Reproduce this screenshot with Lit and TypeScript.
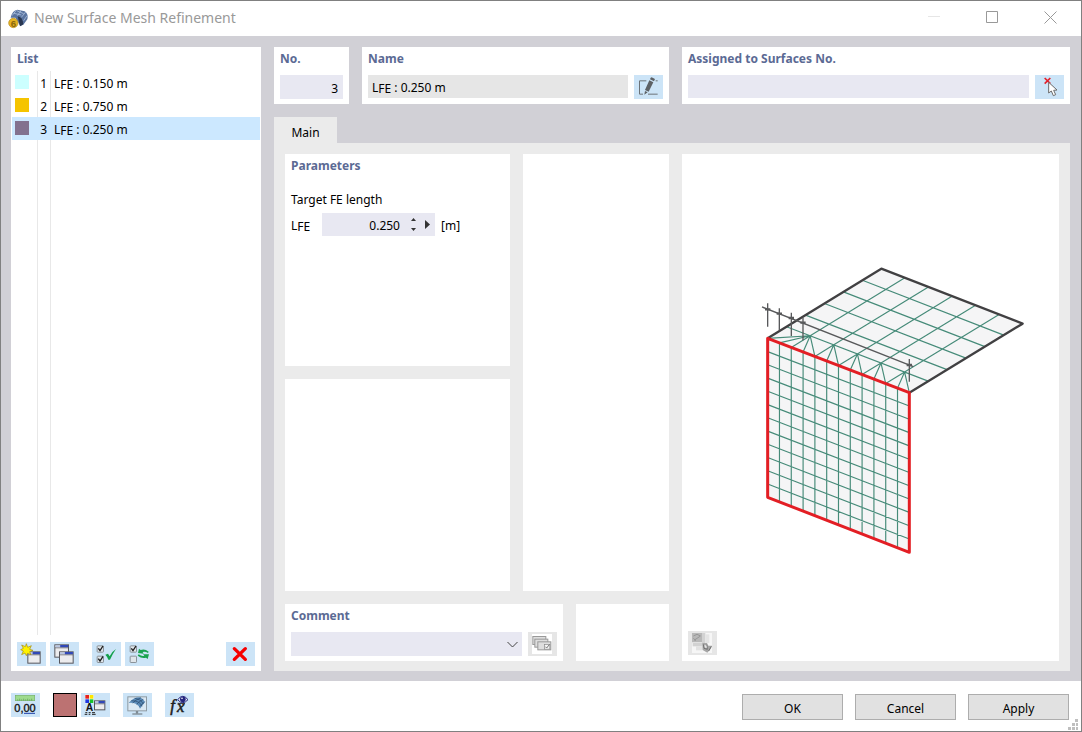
import { LitElement, html, svg, css } from "lit";
import { customElement, state } from "lit/decorators.js";

interface Refinement {
  no: number;
  color: string;
  length: string;
}

const ITEMS: Refinement[] = [
  { no: 1, color: "#ccffff", length: "0.150" },
  { no: 2, color: "#f5c400", length: "0.750" },
  { no: 3, color: "#83718f", length: "0.250" },
];

/* Icons share an 87 x 72 grid, three units to each screen pixel. */
const icon = (body: unknown) => html`
  <svg class="icon" viewBox="0 0 87 72" aria-hidden="true">${body}</svg>
`;

const miniWindow = (x: number, y: number, w = 40, h = 37) => svg`
  <rect x=${x + 1.5} y=${y + 1.5} width=${w - 3} height=${h - 3} fill="#ececee" stroke="#56565c" stroke-width="3"/>
  <rect x=${x + 3} y=${y + 3} width=${w - 6} height="6" fill="#b9c6e2"/>
  <rect x=${x + w * 0.4} y=${y + 2} width=${w * 0.55} height="7" fill="#3148b8"/>
  <path d="M${x + 2} ${y + 10.5}h${w - 4}" stroke="#56565c" stroke-width="2"/>
`;

const tickBox = (x: number, y: number, ticked: boolean) => svg`
  <rect x=${x + 1.5} y=${y + 1.5} width="19" height="19" rx="2" fill="#dfe5ea" stroke="#8a9299" stroke-width="3"/>
  ${ticked ? svg`<path d="M${x + 5} ${y + 9}l5 7 9-14" fill="none" stroke="#1c1c1c" stroke-width="4"/>` : null}
`;

const icons = {
  create: icon(svg`
    ${miniWindow(31, 28)}
    <path d="M28 5l4 11 11-5-5 11 10 3-10 4 4 9-10-4-4 7-4-8-10 5 5-11-8-4 8-4-5-10 11 5z" fill="#fff200" stroke="#a58b10" stroke-width="2"/>`),
  copy: icon(svg`${miniWindow(13, 7, 44, 40)}${miniWindow(27, 28, 44, 37)}`),
  checkAll: icon(svg`
    ${tickBox(14, 10, true)}${tickBox(14, 41, true)}
    <path d="M40 38l8-3 5 8q6-14 19-22-11 16-18 32h-5q-3-9-9-15z" fill="#14a14c"/>`),
  invert: icon(svg`
    ${tickBox(14, 10, true)}${tickBox(14, 41, false)}
    <path d="M39 33l3-13 5 4q12-5 24 5l-2 4q-9-6-16-3l3 5z" fill="#1aa34f"/>
    <path d="M72 37l-4 14-5-4q-12 4-25-6l3-4q10 7 17 4l-4-4z" fill="#1aa34f"/>`),
  remove: icon(svg`
    <path d="M25 20l33 32M58 20L25 52" fill="none" stroke="#f60000" stroke-width="10" stroke-linecap="round"/>`),
  units: icon(svg`
    <rect x="13" y="7" width="58" height="16" fill="#9edb8e" stroke="#74b266" stroke-width="2"/>
    <path d="M20 23v-4M26 23v-6M32 23v-4M38 23v-6M44 23v-4M50 23v-6M56 23v-4M62 23v-6" stroke="#5a9a4e" stroke-width="2"/>
    <text x="10" y="56" font-family="Liberation Sans" font-size="33" fill="#111" stroke="#111">0,00</text>
    <path d="M39 61h33" stroke="#1f3fa8" stroke-width="3"/>`),
  display: icon(svg`
    <path d="M12 5h26v26H12z" fill="#fff" opacity=".7"/>
    <rect x="13" y="6" width="11" height="11" fill="#e8221c"/><rect x="26" y="6" width="11" height="11" fill="#ffe600"/>
    <rect x="13" y="19" width="11" height="11" fill="#1f36e0"/><rect x="26" y="19" width="11" height="11" fill="#17c22b"/>
    <text x="14" y="55" font-family="Liberation Sans" font-weight="bold" font-size="31" fill="#111">A</text>
    <path d="M13 59h6m4 0h6m4 0h9M11 64h8m4 0h5m5 0h11" stroke="#222" stroke-width="3"/>
    ${miniWindow(39, 22, 34, 30)}`),
  view: icon(svg`
    <rect x="14.500" y="11.500" width="56" height="42" fill="#dbe9f4" stroke="#8d9aa3" stroke-width="3"/>
    <path d="M42 54v8" stroke="#7f8b94" stroke-width="7"/><path d="M28 63h30" stroke="#7f8b94" stroke-width="4"/>
    <path d="M17 30Q32 12 50 13q11 3 16 14L51 47q-3-10-13-15-11-4-21-2z" fill="#5d8dba"/>
    <path d="M25 23q26 0 32 17M35 16q18 2 26 17M29 30q8-9 25-16M41 34q7-9 20-15M50 41l15-15" fill="none" stroke="#284a6d" stroke-width="2"/>`),
  formula: icon(svg`
    <g font-family="Liberation Serif" font-style="italic" fill="#1c1c1c" stroke="#1c1c1c" stroke-width="1.500">
      <text x="16" y="55" font-size="50">f</text><text x="36" y="57" font-size="50">x</text>
    </g>
    <path d="M38 31h22" stroke="#222" stroke-width="3"/>
    <path d="M38 20q15-20 31 0-16 18-31 0z" fill="#e7e9f7" stroke="#25257d" stroke-width="3"/>
    <circle cx="53.500" cy="19" r="8.500" fill="#25257d"/><circle cx="51" cy="16" r="2.500" fill="#fff"/>`),
  edit: icon(svg`
    <path d="M37 17.500H16.500v40H27M42 57.500h29M65 17.500h6" fill="none" stroke="#6c7378" stroke-width="3"/>
    <path d="M46 16l12 6-14 28-11-5zM50 8l3-1 10 5-3 7-12-6zM33 48l8 4-10 7z" fill="#5d6165"/>`),
  pick: icon(svg`
    <path d="M29 9l17 17M46 9L29 26" stroke="#e3202b" stroke-width="5"/>
    <path d="M41 22v32l8-6 6 14 7-3-6-13 10-1z" fill="#fff" stroke="#6a6a6a" stroke-width="3"/>`),
  library: icon(svg`
    <rect x="12" y="6" width="60" height="60" fill="#fff"/>
    <g fill="#dedede" stroke="#999" stroke-width="3">
      <rect x="14.500" y="13.500" width="39" height="24"/><rect x="20.500" y="21.500" width="39" height="24"/><rect x="29.500" y="29.500" width="39" height="24"/>
    </g>
    <rect x="49.500" y="37.500" width="16" height="14" fill="#f6f6f6" stroke="#888" stroke-width="2"/>
    <path d="M52 44l4 4 8-10" fill="none" stroke="#777" stroke-width="3"/>`),
  picture: icon(svg`
    <rect x="12" y="6" width="60" height="60" fill="#f6f6f6"/>
    <rect x="42" y="6" width="10" height="30" fill="#d2d2d2"/><rect x="52" y="10" width="12" height="26" fill="#e4e4e4"/>
    <rect x="14" y="36" width="30" height="10" fill="#d2d2d2"/><rect x="24" y="46" width="20" height="12" fill="#e2e2e2"/>
    <rect x="12" y="6" width="30" height="28" fill="#b8b8b8"/>
    <path d="M16 15l11-5 11 5M18 28l18-12M16 22l8 7" fill="none" stroke="#979797" stroke-width="3"/>
    <path d="M43 36h14l4 8h11l-4 10-10 11-14-8z" fill="#a6a6a6"/>
    <path d="M46 40l2 12 10 3-2-14M70 46l-8 14" fill="none" stroke="#737373" stroke-width="3"/>
    <path d="M49 43h6l2 7h-6z" fill="#e6e6e6"/>`),
};

/* Mesh sketch: a fine wall mesh joined to a coarse slab mesh by a fan of triangles. */
type Point = [number, number];
const line = (a: Point, b: Point) => `M${a[0].toFixed(1)} ${a[1].toFixed(1)}L${b[0].toFixed(1)} ${b[1].toFixed(1)}`;
const mix = (a: Point, b: Point, t: number): Point => [a[0] + (b[0] - a[0]) * t, a[1] + (b[1] - a[1]) * t];

const A: Point = [83, 265];
const B: Point = [424, 56];
const C: Point = [848, 221];
const D: Point = [508, 428];
const E: Point = [508, 907];
const F: Point = [83, 742];

function meshPath(): string {
  const parts: string[] = [];
  for (let i = 1; i < 12; i++) {
    parts.push(line(mix(A, D, i / 12), mix(F, E, i / 12)));
    parts.push(line(mix(A, F, i / 12), mix(D, E, i / 12)));
  }
  for (let i = 1; i < 6; i++) {
    parts.push(line(mix(A, B, i / 6), mix(D, C, i / 6)));
    const node = mix(mix(A, B, 1 / 6), mix(D, C, 1 / 6), i / 6);
    parts.push(line(mix(B, C, i / 6), node));
    for (let k = i === 1 ? 0 : i * 2; k <= i * 2 + 2; k++) {
      parts.push(line(node, mix(A, D, k / 12)));
    }
  }
  return parts.join("");
}

const sketch = html`
  <svg class="sketch" viewBox="0 0 377 477" role="img" aria-label="Surface mesh refinement">
    <g transform="translate(58 96) scale(0.3333)" fill="none" stroke-linejoin="round">
      <path d="M${A}L${B}L${C}L${D}L${E}L${F}z" fill="#f5f5f6"/>
      <path d=${meshPath()} stroke="#468b79" stroke-width="3.500"/>
      <path d="M${A}L${B}L${C}L${D}" stroke="#414042" stroke-width="7"/>
      <path d="M66 171L520 350M83 160v70M118 175v66M154 188v70M189 203v68M508 327v68" stroke="#58595b" stroke-width="4"/>
      <path d="M75 178h16M110 191h16M146 204h16M181 218h16M500 345h16" stroke="#58595b" stroke-width="7"/>
      <path d="M${A}L${D}L${E}L${F}z" stroke="#e31e24" stroke-width="9"/>
    </g>
  </svg>
`;

@customElement("app-root")
export class AppRoot extends LitElement {
  @state() private selected = 3;

  static styles = css`
    :host {
      display: block;
      font-family: "Noto Sans", "Open Sans", sans-serif;
      font-size: 12px;
      line-height: 18px;
      color: #000;
    }
    * { box-sizing: border-box; }
    button, input, select { font: inherit; color: inherit; margin: 0; padding: 0; border: 0; border-radius: 0; }
    input, select { min-width: 0; height: 24px; background: #e8e8f2; appearance: none; }
    .window { display: flex; flex-direction: column; min-height: 100vh; border: 1px solid #808080; background: #fff; }

    .titlebar { display: flex; align-items: center; height: 35px; padding-left: 7px; }
    .title { flex: 1; margin: 0 0 2px 6px; font-size: 14px; font-weight: 400; color: #999; }
    .logo { width: 20px; height: 20px; }
    .control { width: 58px; height: 34px; background: none; }
    .control svg { display: block; width: 13px; height: 13px; margin: auto; fill: none; stroke: #999; }
    .control .faint { stroke: #e6e6e6; }
    .controls { display: flex; padding-right: 2px; margin-bottom: 2px; }

    .body { flex: 1; display: grid; grid-template-columns: 250px minmax(0, 1fr); gap: 13px; padding: 11px 11px 10px 10px; background: #d1d0d6; }
    .card { background: #fff; padding: 2px 6px 5px; min-width: 0; }
    h2, .heading { display: block; margin: 0; font-size: 12px; line-height: 20px; font-weight: 700; color: #5b6a94; }
    .field-row { display: flex; gap: 6px; margin-top: 6px; }
    .field-row > :first-child { flex: 1; }
    sub { font-size: 12px; line-height: 1; vertical-align: -1px; }

    .tool { flex: none; width: 29px; height: 24px; background: #cce4f7; }
    .tool:disabled { background: #e6e6e6; }
    .icon { display: block; width: 29px; height: 24px; }
    .gap { margin-left: 9px; }
    .push { margin-left: auto; }

    .list { display: flex; flex-direction: column; }
    .items {
      flex: 1; margin: 2px -5px 7px; padding: 0; list-style: none;
      background:
        linear-gradient(#e8e8e8, #e8e8e8) 25px 0 / 1px 100% no-repeat,
        linear-gradient(#e8e8e8, #e8e8e8) 38px 0 / 1px 100% no-repeat;
    }
    .item { display: grid; grid-template-columns: 14px 18px 1fr; align-items: center; height: 23px; padding-left: 3px; cursor: default; }
    .item[aria-selected="true"] { background: #cce8ff; }
    .swatch { height: 14px; margin-bottom: 1px; }
    .number { padding-top: 2px; text-align: right; }
    .label { padding: 2px 0 0 7px; }
    .tools { display: flex; gap: 4px; }

    .main { display: flex; flex-direction: column; min-width: 0; }
    .top { display: grid; grid-template-columns: 75px minmax(0, 307px) minmax(0, 1fr); gap: 13px; margin-bottom: 13px; }
    .no { width: 100%; padding: 2px 5px 0 0; text-align: right; }
    .name { height: 23px; padding: 4px 4px 0; background: #e6e6e6; }
    .assigned { height: 23px; }
    .tab { width: 63px; height: 26px; padding-top: 5px; background: #ebebeb; }
    .page {
      flex: 1; display: grid; gap: 13px; padding: 11px 11px 10px; background: #ebebeb;
      grid-template-columns: 225px 40px 93px minmax(0, 1fr);
      grid-template-rows: 1fr 1fr auto;
    }
    .middle { grid-column: 2 / 4; grid-row: 1 / 3; }
    .preview { grid-column: 4; grid-row: 1 / 4; display: flex; flex-direction: column; padding: 0 6px 6px; }
    .sketch { flex: 1; min-height: 0; margin: 0 -6px; }
    .comment { grid-column: 1 / 3; }
    .parameter { display: block; margin-top: 15px; }
    .length-row { display: flex; align-items: center; margin-top: 4px; }
    .symbol { width: 31px; padding-top: 2px; }
    .spin { display: flex; align-items: center; width: 113px; height: 23px; margin-right: 6px; background: #e8e8f2; }
    .spin input { flex: 1; height: 23px; padding-top: 2px; text-align: right; background: none; }
    .steps { display: grid; width: 8px; margin-left: 9px; gap: 7px; }
    .step, .more { background: none; }
    .step svg, .more svg { display: block; fill: #333; }
    .more { width: 18px; padding: 0 4px 0 7px; }
    .unit { padding-top: 2px; }
    .select { display: grid; align-items: center; }
    .select > * { grid-area: 1 / 1; }
    .select select { width: 100%; }
    .select svg { justify-self: end; margin-right: 4px; width: 11px; height: 7px; fill: none; stroke: #444; pointer-events: none; }

    .footer { display: flex; align-items: flex-start; gap: 12px; height: 50px; padding: 12px 0 0 10px; }
    .left { display: flex; flex: 1; gap: 4px; }
    .wide { margin-left: 9px; }
    .color { width: 24px; height: 24px; margin-left: 9px; border: 1px solid #000; background: #bc7272; }
    .action { width: 101px; height: 26px; padding-top: 3px; margin-top: 1px; border: 1px solid #adadad; background: #e1e1e1; }
    .grip { align-self: flex-end; width: 10px; height: 11px; margin: 0 3px 1px -13px; fill: #bfbfbf; }
  `;

  private itemLabel(length: string) {
    return html`L<sub>FE</sub> : ${length} m`;
  }

  render() {
    const current = ITEMS.find((item) => item.no === this.selected) ?? ITEMS[0];
    return html`
      <div class="window">
        <header class="titlebar">
          <svg class="logo" viewBox="0 0 60 60" aria-hidden="true">
            <path d="M8 26Q13 4 28 2l22 5q12 8 8 24L46 47l-9 4-15-25z" fill="#5a74a0"/>
            <path d="M18 13l22 5M26 5l21 9M28 20L40 4M40 25L53 9M47 35l10-15M12 20l12-15" fill="none" stroke="#a9bedd" stroke-width="2.500"/>
            <path d="M29 22q15 2 17 24l-10 6z" fill="#2a3852"/>
            <circle cx="16" cy="42" r="14" fill="#e6b422" stroke="#b58a1c" stroke-width="2"/>
            <text x="8" y="53" font-family="Liberation Sans" font-weight="bold" font-size="29" fill="#8a660f">6</text>
          </svg>
          <h1 class="title">New Surface Mesh Refinement</h1>
          <div class="controls">
            <button class="control" aria-label="Minimize"><svg viewBox="0 0 13 13"><path class="faint" d="M0 5.500h12"/></svg></button>
            <button class="control" aria-label="Maximize"><svg viewBox="0 0 13 13"><path d="M.5.5h11v11H.5z"/></svg></button>
            <button class="control" aria-label="Close"><svg viewBox="0 0 13 13"><path d="M.5.5l12 12M12.500.5l-12 12"/></svg></button>
          </div>
        </header>

        <div class="body">
          <section class="card list">
            <h2>List</h2>
            <ul class="items" role="listbox" aria-label="List">
              ${ITEMS.map((item) => html`
                <li class="item" role="option" aria-selected=${item.no === this.selected} @click=${() => (this.selected = item.no)}>
                  <span class="swatch" style="background:${item.color}"></span>
                  <span class="number">${item.no}</span>
                  <span class="label">${this.itemLabel(item.length)}</span>
                </li>`)}
            </ul>
            <div class="tools">
              <button class="tool" aria-label="New">${icons.create}</button>
              <button class="tool" aria-label="Copy">${icons.copy}</button>
              <button class="tool gap" aria-label="Select all">${icons.checkAll}</button>
              <button class="tool" aria-label="Invert selection">${icons.invert}</button>
              <button class="tool push" aria-label="Delete">${icons.remove}</button>
            </div>
          </section>

          <main class="main">
            <div class="top">
              <section class="card">
                <label class="heading" for="no">No.</label>
                <div class="field-row"><input id="no" class="no" .value=${String(current.no)}></div>
              </section>
              <section class="card">
                <h2>Name</h2>
                <div class="field-row">
                  <output class="name" aria-label="Name">${this.itemLabel(current.length)}</output>
                  <button class="tool" aria-label="Edit name">${icons.edit}</button>
                </div>
              </section>
              <section class="card">
                <label class="heading" for="assigned">Assigned to Surfaces No.</label>
                <div class="field-row">
                  <input id="assigned" class="assigned">
                  <button class="tool" aria-label="Pick surfaces">${icons.pick}</button>
                </div>
              </section>
            </div>

            <div role="tablist"><button class="tab" role="tab" aria-selected="true">Main</button></div>
            <div class="page" role="tabpanel">
              <section class="card">
                <h2>Parameters</h2>
                <label class="parameter" for="length">Target FE length</label>
                <div class="length-row">
                  <span class="symbol">L<sub>FE</sub></span>
                  <div class="spin">
                    <input id="length" .value=${current.length}>
                    <span class="steps">
                      <button class="step" aria-label="Increase"><svg width="8" height="4" viewBox="0 0 8 4"><path d="M2 4l2.500-3L7 4z"/></svg></button>
                      <button class="step" aria-label="Decrease"><svg width="8" height="4" viewBox="0 0 8 4"><path d="M2 0l2.500 3L7 0z"/></svg></button>
                    </span>
                    <button class="more" aria-label="More"><svg width="7" height="9" viewBox="0 0 7 9"><path d="M1 0l5 4.500L1 9z"/></svg></button>
                  </div>
                  <span class="unit">[m]</span>
                </div>
              </section>
              <section class="card middle"></section>
              <section class="card preview">
                ${sketch}
                <button class="tool" disabled aria-label="Picture">${icons.picture}</button>
              </section>
              <section class="card"></section>
              <section class="card comment">
                <label class="heading" for="comment">Comment</label>
                <div class="field-row">
                  <div class="select">
                    <select id="comment"><option></option></select>
                    <svg viewBox="0 0 11 7"><path d="M.5 1l5 5 5-5"/></svg>
                  </div>
                  <button class="tool" disabled aria-label="Comment library">${icons.library}</button>
                </div>
              </section>
              <section class="card"></section>
            </div>
          </main>
        </div>

        <footer class="footer">
          <div class="left">
            <button class="tool" aria-label="Units">${icons.units}</button>
            <button class="color" aria-label="Color"></button>
            <button class="tool" aria-label="Display properties">${icons.display}</button>
            <button class="tool wide" aria-label="View">${icons.view}</button>
            <button class="tool wide" aria-label="Formula">${icons.formula}</button>
          </div>
          <button class="action">OK</button>
          <button class="action">Cancel</button>
          <button class="action">Apply</button>
          <svg class="grip" viewBox="0 0 10 11" aria-hidden="true">
            <path d="M7 0h3v3H7zM4 4h3v3H4zM8 4h2v3H8zM0 8h3v3H0zM4 8h3v3H4zM8 8h2v3H8z"/>
          </svg>
        </footer>
      </div>
    `;
  }
}
